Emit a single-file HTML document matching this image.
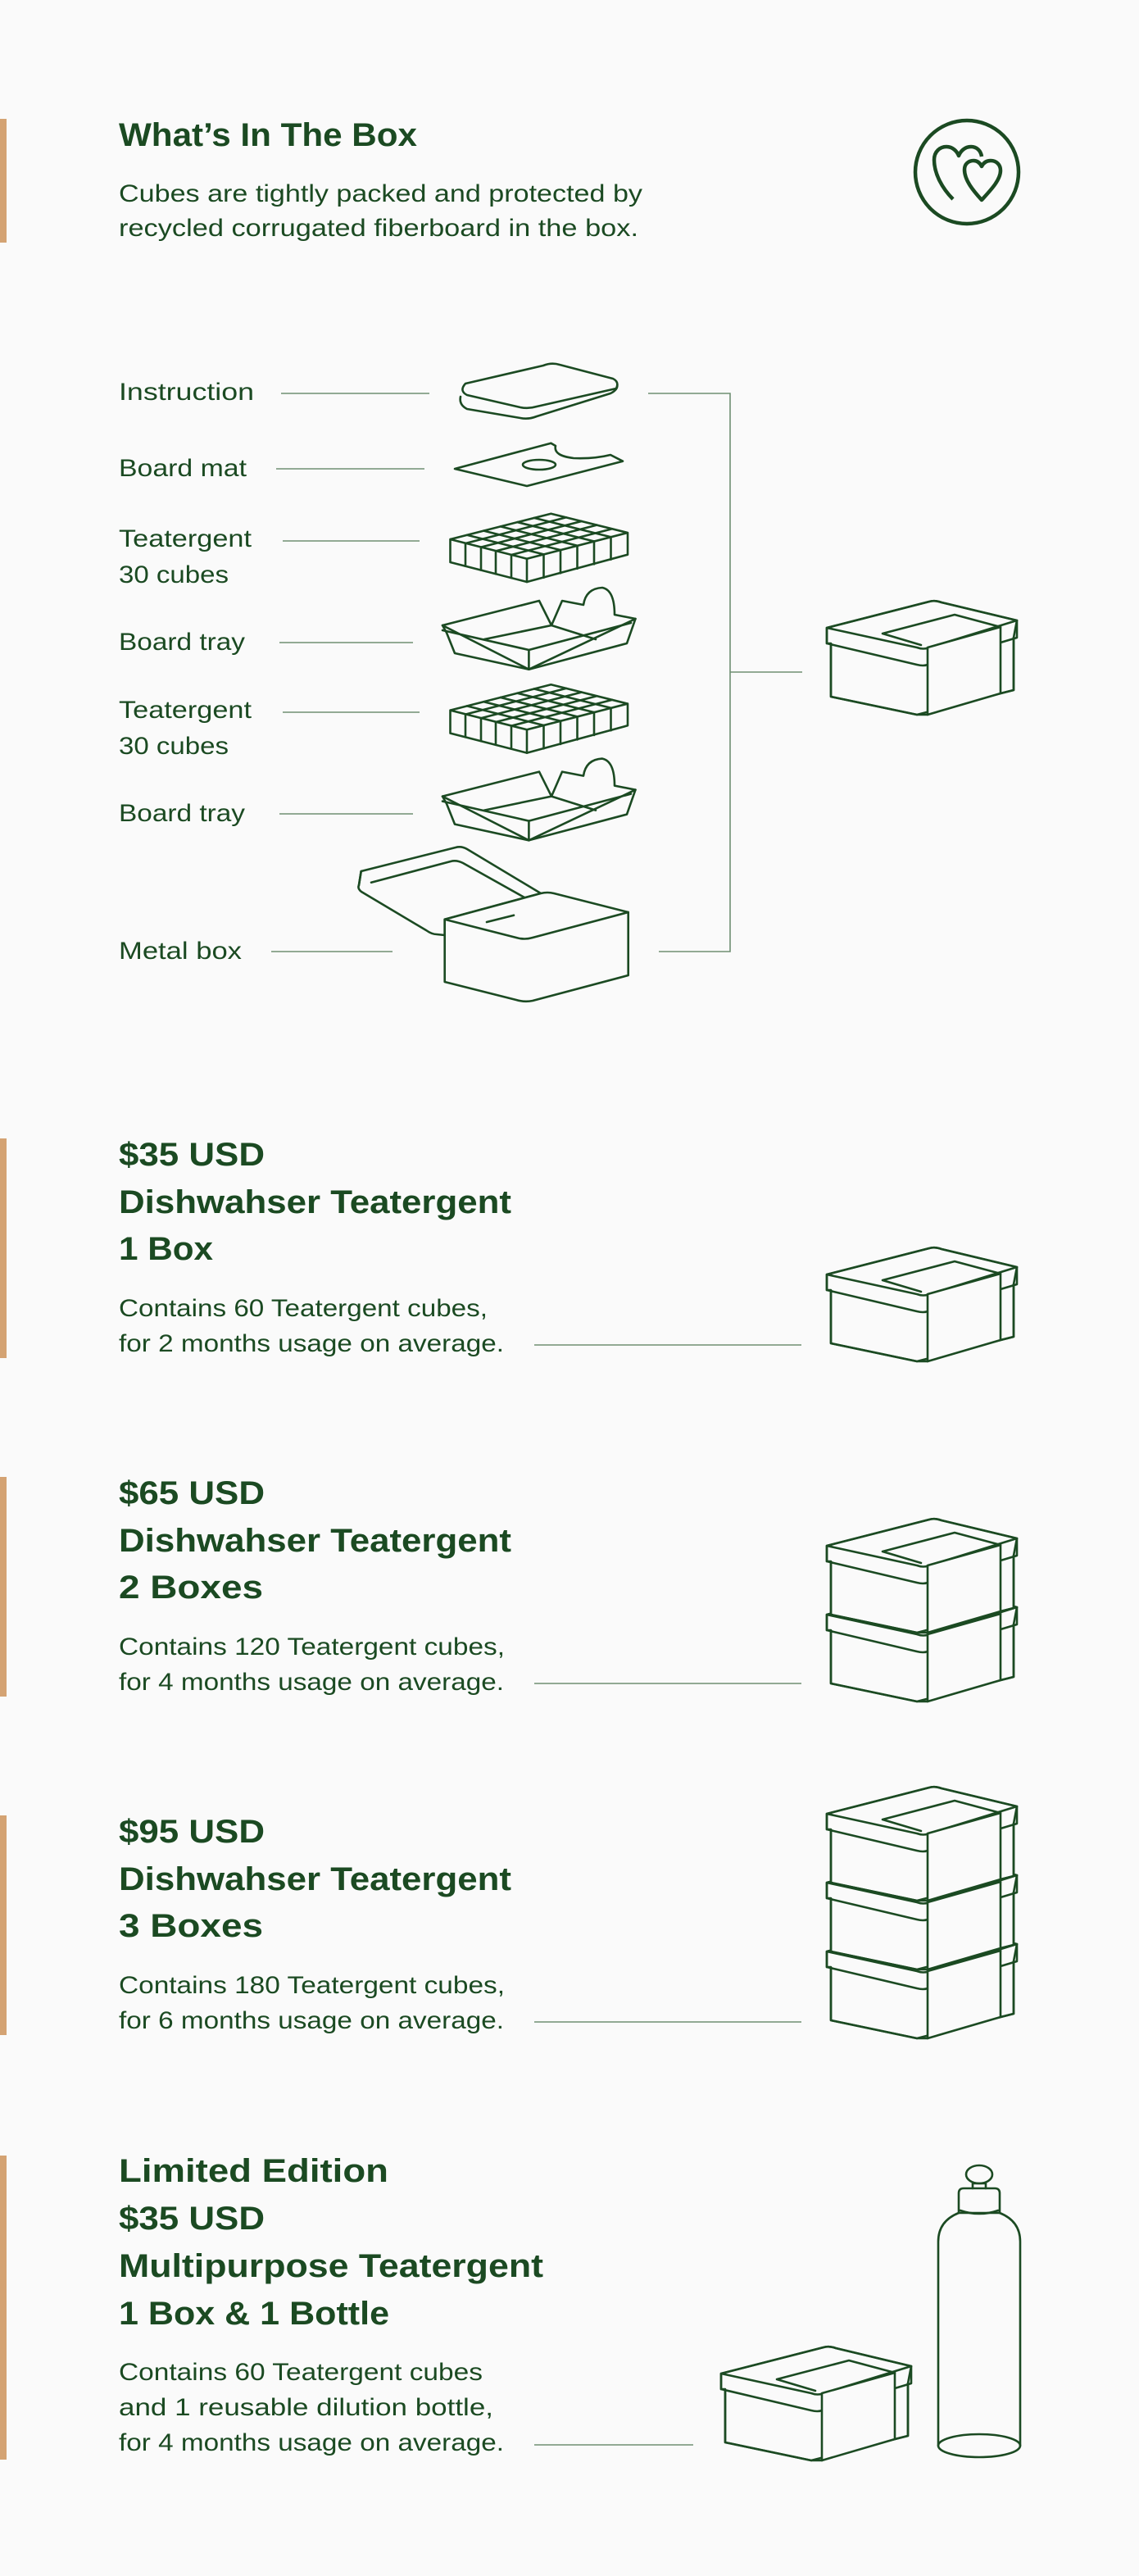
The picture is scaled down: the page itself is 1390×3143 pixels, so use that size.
<!DOCTYPE html>
<html><head><meta charset="utf-8"><style>
html,body{margin:0;padding:0;background:#fafafa}
svg{display:block}
text{font-family:"Liberation Sans",sans-serif;fill:#1b4a22}
.t{font-weight:bold;font-size:40px}
.b{font-size:30px}
.s{fill:none;stroke:#1b4a22;stroke-width:2.6;stroke-linejoin:round;stroke-linecap:round}
.f{fill:#fafafa;stroke:#1b4a22;stroke-width:2.6;stroke-linejoin:round;stroke-linecap:round}
.l{fill:none;stroke:#6f8f72;stroke-width:1.6}
.bar{fill:#d4a373}
</style></head><body>
<svg width="1390" height="3143" viewBox="0 0 1390 3143" xmlns="http://www.w3.org/2000/svg">
<defs>
<g id="box">
  <path class="f" d="M5,19 V84 L110,106 L228,76 V12 L232,-9 L140,-31 Q132,-34 125,-32 L0,0 V19 Z"/>
  <path class="s" d="M0,0 L125,-32 Q132,-34 140,-31 L232,-9 L125,24 Q118,27 110,24 Z"/>
  <path class="s" d="M0,0 V19 L110,45 Q118,47 123,45 M232,-9 V12 L212,18"/>
  <path class="s" d="M5,21 V84 L110,106 L123,106 M228,12 V76 L212,80"/>
  <path class="f" d="M123,24 V106 L212,80 V-1 Z"/>
  <path class="s" d="M212,-1 L156,-16 L68,7 L115,21"/>
</g>
<g id="cubes">
  <path class="f" d="M549.5,658 L672.4,626.7 L766,650 L643,681.7 Z M549.5,658 V686 L643,710 L766,676.7 V650 L643,681.7 Z"/>
  <path class="s" d="M643,681.7 V710"/>
  <g class="s">
    <path d="M568,663 V690.7 M587,667.6 V695.5 M605,672.4 V700.2 M624,677 V705"/>
    <path d="M663.5,676.4 V704.7 M684,671.1 V699.3 M704.5,665.8 V693.8 M725,660.5 V688.3 M745.5,655.2 V682.6"/>
    <path d="M568,663 L690.9,631.3 M587,667.6 L709.6,636 M605,672.4 L728.3,640.6 M624,677 L747,645.3"/>
    <path d="M569.9,652.8 L663.5,676.4 M590.4,647.6 L684,671.1 M610.9,642.4 L704.5,665.8 M631.4,637.1 L725,660.5 M651.9,631.9 L745.5,655.2"/>
  </g>
</g>
<g id="tray">
  <path class="s" d="M540,763 L658,733 L673,763 L686,733 L712,738 Q715,718 735,717 Q750,720 750,750 L775.5,755 L645.4,816.7 Z"/>
  <path class="s" d="M540,763 L545,772 L555,797 L645.4,816.7 L765,785 L775.5,755"/>
  <path class="s" d="M540,769 L645.4,793 L770,760 M645.4,793 L645.4,816.7 M591,780 L673,763 L727,780"/>
</g>
</defs>

<rect class="bar" x="0" y="145" width="8" height="151"/>
<text class="t" x="145" y="178" textLength="364" lengthAdjust="spacingAndGlyphs">What’s In The Box</text>
<text class="b" x="145" y="246" textLength="639" lengthAdjust="spacingAndGlyphs">Cubes are tightly packed and protected by</text>
<text class="b" x="145" y="288" textLength="634" lengthAdjust="spacingAndGlyphs">recycled corrugated fiberboard in the box.</text>
<circle cx="1180" cy="210" r="63" fill="none" stroke="#1b4a22" stroke-width="4.5"/>
<path fill="none" stroke="#1b4a22" stroke-width="4.5" stroke-linejoin="round" d="M1163,243 C1150,230 1140,212 1140,195 C1140,185 1147,179 1155,179 C1163,179 1168,185 1170,190 C1172,185 1177,179 1185,179 C1192,179 1197,184 1198,191"/>
<path fill="none" stroke="#1b4a22" stroke-width="4.5" stroke-linejoin="round" d="M1198,244 C1188,233 1177,220 1177,207 C1177,200 1182,196 1188,196 C1193,196 1196,199 1198,203 C1200,199 1203,196 1209,196 C1216,196 1221,201 1221,208 C1221,220 1208,233 1198,244 Z"/>

<text class="b" x="145" y="488" textLength="165" lengthAdjust="spacingAndGlyphs">Instruction</text>
<text class="b" x="145" y="581" textLength="156" lengthAdjust="spacingAndGlyphs">Board mat</text>
<text class="b" x="145" y="667" textLength="162" lengthAdjust="spacingAndGlyphs">Teatergent</text>
<text class="b" x="145" y="711" textLength="134" lengthAdjust="spacingAndGlyphs">30 cubes</text>
<text class="b" x="145" y="793" textLength="154" lengthAdjust="spacingAndGlyphs">Board tray</text>
<text class="b" x="145" y="876" textLength="162" lengthAdjust="spacingAndGlyphs">Teatergent</text>
<text class="b" x="145" y="920" textLength="134" lengthAdjust="spacingAndGlyphs">30 cubes</text>
<text class="b" x="145" y="1002" textLength="154" lengthAdjust="spacingAndGlyphs">Board tray</text>
<text class="b" x="145" y="1170" textLength="150" lengthAdjust="spacingAndGlyphs">Metal box</text>
<path class="l" d="M343,480 H524 M337,572 H518 M345,660 H512 M341,784 H504 M345,869 H512 M341,993 H504 M331,1161 H479"/>
<path class="l" d="M791,480 H891 V1161 H804 M891,820 H979"/>

<path class="s" d="M562,484 Q560,494 570,499 L635,510 Q645,512 655,508 L745,480 Q755,475 753,468"/>
<path class="f" d="M568,468 L663,446 Q673,442 683,445 L748,462 Q756,466 752,474 L655,496 Q645,499 635,497 L570,482 Q560,477 568,468 Z"/>
<path class="s" d="M555,572 L672.4,540.7 L678,544 Q675,556 700,559 Q725,560 745,555 L760,562.7 L643,593 Z"/>
<ellipse class="s" cx="658" cy="567" rx="20" ry="6"/>
<use href="#cubes"/>
<use href="#tray"/>
<use href="#cubes" transform="translate(0,208.6)"/>
<use href="#tray" transform="translate(0,208.6)"/>
<path class="f" d="M440.7,1063 L556,1034 Q563,1032 570,1036 L660,1090 L542.7,1121.7 V1141 L533,1140 Q527,1140 520,1135 L441,1088 Q436,1084 438,1080 Z"/>
<path class="s" d="M440.7,1063 L438,1080 M453,1076.7 L550,1051 Q557,1049 565,1053 L640,1095"/>
<path class="f" d="M542.7,1121.7 L660,1090 Q668,1088 676,1090 L766.7,1113 V1190 L650,1221 Q640,1223 630,1220 L542.7,1198 Z"/>
<path class="s" d="M542.7,1121.7 L630,1144 Q640,1147 650,1144 L766.7,1113 M594,1125 L627,1116.7"/>
<use href="#box" transform="translate(1009,766)"/>

<rect class="bar" x="0" y="1389" width="8" height="268"/>
<text class="t" x="145" y="1422" textLength="178" lengthAdjust="spacingAndGlyphs">$35 USD</text>
<text class="t" x="145" y="1480" textLength="479" lengthAdjust="spacingAndGlyphs">Dishwahser Teatergent</text>
<text class="t" x="145" y="1537" textLength="115" lengthAdjust="spacingAndGlyphs">1 Box</text>
<text class="b" x="145" y="1606" textLength="450" lengthAdjust="spacingAndGlyphs">Contains 60 Teatergent cubes,</text>
<text class="b" x="145" y="1649" textLength="470" lengthAdjust="spacingAndGlyphs">for 2 months usage on average.</text>
<path class="l" d="M652,1641 H978"/>
<use href="#box" transform="translate(1009,1555)"/>

<rect class="bar" x="0" y="1802" width="8" height="268"/>
<text class="t" x="145" y="1835" textLength="178" lengthAdjust="spacingAndGlyphs">$65 USD</text>
<text class="t" x="145" y="1893" textLength="479" lengthAdjust="spacingAndGlyphs">Dishwahser Teatergent</text>
<text class="t" x="145" y="1950" textLength="176" lengthAdjust="spacingAndGlyphs">2 Boxes</text>
<text class="b" x="145" y="2019" textLength="471" lengthAdjust="spacingAndGlyphs">Contains 120 Teatergent cubes,</text>
<text class="b" x="145" y="2062" textLength="470" lengthAdjust="spacingAndGlyphs">for 4 months usage on average.</text>
<path class="l" d="M652,2054 H978"/>
<use href="#box" transform="translate(1009,1970)"/>
<use href="#box" transform="translate(1009,1886)"/>

<rect class="bar" x="0" y="2215" width="8" height="268"/>
<text class="t" x="145" y="2248" textLength="178" lengthAdjust="spacingAndGlyphs">$95 USD</text>
<text class="t" x="145" y="2306" textLength="479" lengthAdjust="spacingAndGlyphs">Dishwahser Teatergent</text>
<text class="t" x="145" y="2363" textLength="176" lengthAdjust="spacingAndGlyphs">3 Boxes</text>
<text class="b" x="145" y="2432" textLength="471" lengthAdjust="spacingAndGlyphs">Contains 180 Teatergent cubes,</text>
<text class="b" x="145" y="2475" textLength="470" lengthAdjust="spacingAndGlyphs">for 6 months usage on average.</text>
<path class="l" d="M652,2467 H978"/>
<use href="#box" transform="translate(1009,2381)"/>
<use href="#box" transform="translate(1009,2297)"/>
<use href="#box" transform="translate(1009,2213)"/>

<rect class="bar" x="0" y="2630" width="8" height="371"/>
<text class="t" x="145" y="2662" textLength="329" lengthAdjust="spacingAndGlyphs">Limited Edition</text>
<text class="t" x="145" y="2720" textLength="178" lengthAdjust="spacingAndGlyphs">$35 USD</text>
<text class="t" x="145" y="2778" textLength="518" lengthAdjust="spacingAndGlyphs">Multipurpose Teatergent</text>
<text class="t" x="145" y="2836" textLength="330" lengthAdjust="spacingAndGlyphs">1 Box &amp; 1 Bottle</text>
<text class="b" x="145" y="2904" textLength="444" lengthAdjust="spacingAndGlyphs">Contains 60 Teatergent cubes</text>
<text class="b" x="145" y="2947" textLength="457" lengthAdjust="spacingAndGlyphs">and 1 reusable dilution bottle,</text>
<text class="b" x="145" y="2990" textLength="470" lengthAdjust="spacingAndGlyphs">for 4 months usage on average.</text>
<path class="l" d="M652,2983 H846"/>
<use href="#box" transform="translate(880,2896)"/>
<path class="s" d="M1145,2984 V2735 Q1145,2710 1170,2700 L1220,2700 Q1245,2710 1245,2735 V2984"/>
<ellipse class="s" cx="1195" cy="2984" rx="50" ry="14"/>
<path class="s" d="M1170,2700 V2676 Q1170,2670 1176,2670 H1214 Q1220,2670 1220,2676 V2700 M1172,2697 Q1195,2705 1218,2697"/>
<path class="s" d="M1187,2670 V2664 H1203 V2670"/>
<ellipse class="s" cx="1195" cy="2653" rx="16" ry="11"/>
</svg>
</body></html>
